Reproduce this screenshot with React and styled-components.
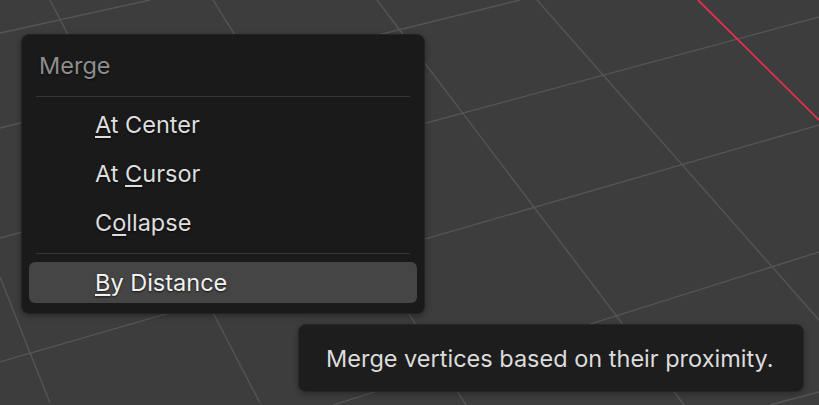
import React from "react";
import styled, { createGlobalStyle } from "styled-components";

const GlobalStyle = createGlobalStyle`
  html, body {
    margin: 0;
    padding: 0;
    background: #3d3d3d;
    overflow: hidden;
  }
  body {
    font-family: Inter, "Noto Sans", "DejaVu Sans", sans-serif;
  }
`;

const Viewport = styled.div`
  position: relative;
  width: 819px;
  height: 405px;
  background: #3d3d3d;
  overflow: hidden;
`;

const Grid = styled.svg`
  display: block;
  width: 819px;
  height: 405px;
`;

const Menu = styled.div`
  position: absolute;
  left: 21px;
  top: 34px;
  width: 404px;
  box-sizing: border-box;
  display: flex;
  flex-direction: column;
  padding-bottom: 10px;
  background: #1a1a1a;
  border: 1px solid #232323;
  border-radius: 8px;
  box-shadow: 0 2px 6px rgba(0, 0, 0, 0.35);
`;

const Title = styled.div`
  height: 61px;
  display: flex;
  align-items: center;
  padding-left: 17px;
  font-size: 23.5px;
  color: #8e8e8e;
  text-shadow: 0 1px 2px rgba(0, 0, 0, 0.7);
`;

const Separator = styled.div`
  height: 1px;
  margin: ${(p) => p.$margin || "0"};
  margin-left: 14px;
  margin-right: 14px;
  background: #363636;
`;

const Items = styled.div`
  display: flex;
  flex-direction: column;
  gap: 8px;
  padding-top: 7px;
`;

const Item = styled.div`
  height: 41px;
  margin: 0 7px;
  display: flex;
  align-items: center;
  padding-left: 66px;
  border-radius: 6px;
  font-size: 23.5px;
  color: ${(p) => (p.$active ? "#f2f2f2" : "#dedede")};
  background: ${(p) => (p.$active ? "#454545" : "transparent")};
  text-shadow: 0 1px 2px rgba(0, 0, 0, 0.7);
  white-space: pre;
`;

const Key = styled.span`
  text-decoration: underline;
  text-decoration-thickness: 1.5px;
  text-underline-offset: 3px;
`;

const Tooltip = styled.div`
  position: absolute;
  left: 298px;
  top: 324px;
  width: 506px;
  height: 68px;
  box-sizing: border-box;
  display: flex;
  align-items: center;
  padding-left: 27px;
  background: #1d1d1d;
  border: 1px solid #262626;
  border-radius: 8px;
  font-size: 23.5px;
  color: #dcdcdc;
  white-space: nowrap;
  box-shadow: 0 2px 6px rgba(0, 0, 0, 0.3);
`;

const gridLines = [
  [0, 33, 150, 0],
  [0, 128, 520, 0],
  [0, 238, 819, 17],
  [0, 362, 819, 125],
  [333, 405, 819, 252],
  [770, 405, 819, 392],
  [50, 0, 260, 403],
  [213, 0, 466, 405],
  [377, 0, 684, 405],
  [537, 0, 819, 320],
  [0, 277, 50, 403],
];

function App() {
  return (
    <Viewport>
      <GlobalStyle />
      <Grid viewBox="0 0 819 405">
        {gridLines.map(([x1, y1, x2, y2], i) => (
          <line key={i} x1={x1} y1={y1} x2={x2} y2={y2} stroke="#565656" strokeWidth="1.3" />
        ))}
        <line x1="698" y1="0" x2="819" y2="120" stroke="#e2304d" strokeWidth="1.8" />
      </Grid>

      <Menu>
        <Title>Merge</Title>
        <Separator />
        <Items>
          <Item>
            <span><Key>A</Key>t Center</span>
          </Item>
          <Item>
            <span>At <Key>C</Key>ursor</span>
          </Item>
          <Item>
            <span>C<Key>o</Key>llapse</span>
          </Item>
        </Items>
        <Separator $margin="10px 0 8px" />
        <Item $active>
          <span><Key>B</Key>y Distance</span>
        </Item>
      </Menu>

      <Tooltip>Merge vertices based on their proximity.</Tooltip>
    </Viewport>
  );
}

export default App;
